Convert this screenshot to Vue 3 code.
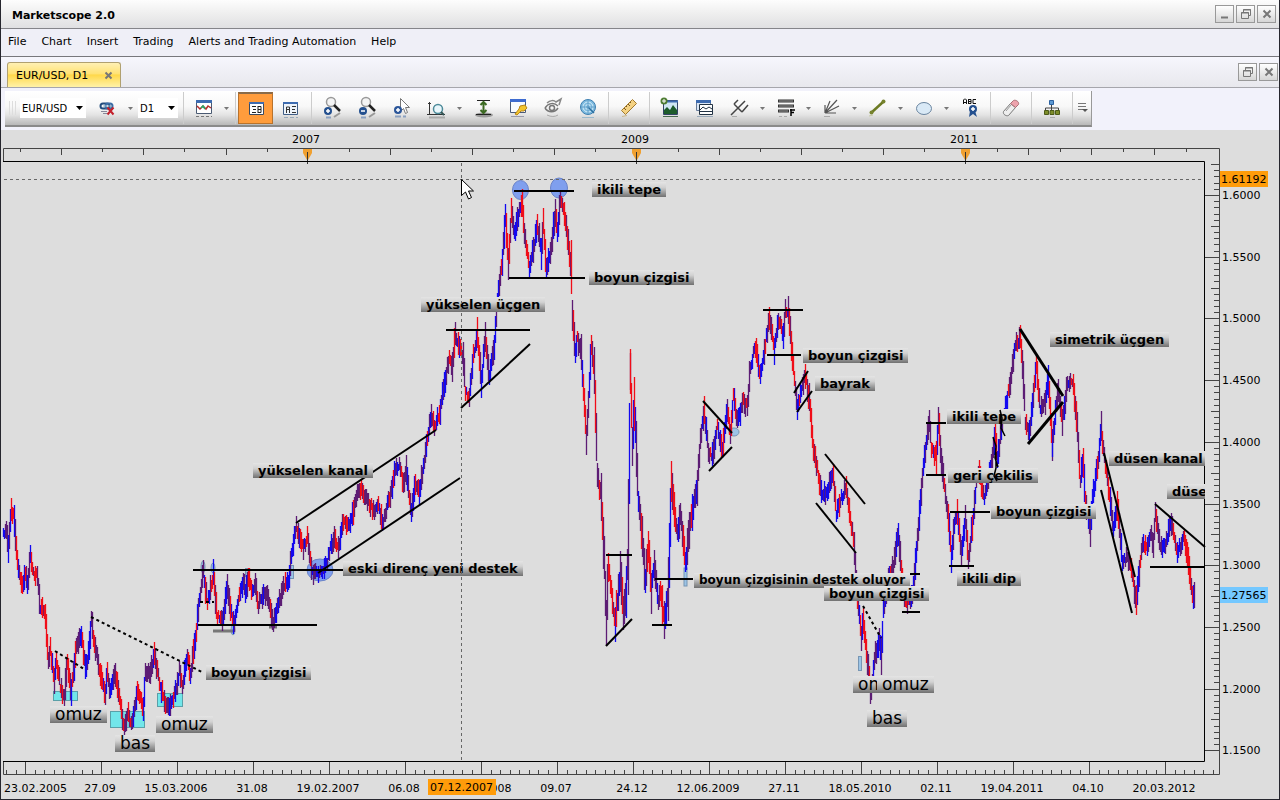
<script setup>
const menus = ['File', 'Chart', 'Insert', 'Trading', 'Alerts and Trading Automation', 'Help']

const tools = [
  { icon: 'link', label: 'Link symbol', caret: true, slot: 'a' },
  { icon: 'chart', label: 'Chart type', caret: true, slot: 'b', sepBefore: true, sepAfter: true },
  { icon: 'bid', label: 'Bid prices', active: true, slot: 'b' },
  { icon: 'ask', label: 'Ask prices', slot: 'b', sepAfter: true },
  { icon: 'zoomin', label: 'Zoom in', slot: 'b' },
  { icon: 'zoomout', label: 'Zoom out', slot: 'b' },
  { icon: 'pointer', label: 'Pointer', slot: 'b' },
  { icon: 'area', label: 'Zoom area', caret: true, slot: 'b' },
  { icon: 'fit', label: 'Fit height', slot: 'b' },
  { icon: 'key', label: 'Properties', slot: 'b' },
  { icon: 'eye', label: 'Show or hide', slot: 'b' },
  { icon: 'radar', label: 'Overview', slot: 'b', sepAfter: true },
  { icon: 'ruler', label: 'Ruler', slot: 'b', sepAfter: true },
  { icon: 'picture', label: 'Add indicator', slot: 'b' },
  { icon: 'windows', label: 'Indicators list', slot: 'b' },
  { icon: 'fork', label: 'Pitchfork', caret: true, slot: 'b' },
  { icon: 'fibo', label: 'Fibonacci', caret: true, slot: 'b' },
  { icon: 'fan', label: 'Gann fan', caret: true, slot: 'b' },
  { icon: 'line', label: 'Trend line', caret: true, slot: 'b' },
  { icon: 'ellipse', label: 'Ellipse', caret: true, slot: 'b' },
  { icon: 'text', label: 'Text label', slot: 'b', sepAfter: true },
  { icon: 'eraser', label: 'Eraser', slot: 'b', sepAfter: true },
  { icon: 'tree', label: 'Strategies', slot: 'b', sepAfter: true }
]
const linkTool = tools.filter(t => t.slot === 'a')
const mainTools = tools.filter(t => t.slot === 'b')

/* Turning points of the daily series, as x, y pairs on the chart canvas. */
const turns = [
  3,535, 6,532, 8,548, 11,510, 14,520, 17,560, 20,578, 23,585, 25,572, 27,586, 30,556, 33,572, 37,575, 40,606, 45,616,
  48,664, 50,650, 54,682, 56,660, 60,686, 64,699, 67,662, 71,690, 76,648, 81,634, 85,668, 88,655, 91,620, 94,645, 100,672,
  105,696, 107,672, 110,692, 115,674, 119,700, 124,729, 128,714, 132,724, 137,688, 143,708, 145,674, 150,672, 154,655,
  160,688, 165,702, 170,704, 175,694, 179,670, 182,685, 187,655, 190,676, 196,630, 199,602, 203,572, 207,602, 210,590,
  213,575, 217,617, 222,620, 227,588, 233,625, 238,600, 243,582, 245,592, 248,578, 252,592, 255,585, 258,604, 264,592,
  268,600, 273,624, 278,605, 283,586, 288,583, 292,550, 296,526, 303,548, 307,537, 312,574, 320,573, 327,562, 330,546,
  334,539, 338,547, 343,521, 348,525, 352,515, 356,497, 361,489, 367,500, 373,511, 378,503, 382,524, 386,508, 391,490,
  395,468, 399,465, 403,484, 406,468, 408,488, 411,513, 415,482, 419,494, 423,466, 427,440, 431,415, 434,428, 440,410,
  444,384, 449,358, 452,370, 455,334, 459,348, 463,357, 465,393, 469,396, 473,355, 477,335, 481,384, 485,334, 489,377,
  494,346, 497,300, 502,262, 505,215, 508,265, 511,213, 514,233, 518,215, 522,202, 524,230, 529,268, 533,250, 537,224,
  541,253, 543,224, 546,268, 551,245, 555,213, 557,233, 560,198, 565,220, 568,245, 571,270, 572,312, 575,355, 577,337,
  581,355, 583,390, 586,438, 588,405, 591,345, 594,370, 596,440, 597,475, 601,500, 604,560, 606,625, 608,565, 612,600,
  615,622, 620,572, 623,610, 626,590, 628,540, 630,370, 632,445, 634,402, 638,500, 642,540, 645,583, 648,545, 651,590,
  654,565, 658,600, 660,588, 664,620, 668,590, 670,520, 671,480, 674,510, 677,535, 680,512, 683,540, 685,565, 689,530,
  694,500, 697,485, 700,440, 704,412, 708,452, 712,456, 717,427, 722,450, 727,412, 730,432, 733,396, 737,422, 743,400,
  747,408, 750,366, 755,348, 760,375, 764,350, 769,318, 774,348, 778,320, 783,334, 785,310, 788,310, 791,345, 794,380,
  797,407, 801,390, 805,375, 809,400, 813,450, 817,470, 822,498, 828,488, 833,475, 836,515, 840,500, 846,488, 850,520,
  854,545, 856,585, 858,605, 861,640, 863,620, 866,650, 870,692, 872,680, 875,655, 879,640, 881,657, 883,612, 888,578,
  893,567, 898,534, 901,570, 904,597, 907,605, 911,598, 914,578, 917,540, 920,500, 925,450, 929,418, 931,448, 936,458,
  938,418, 941,460, 945,492, 949,530, 951,558, 954,525, 957,513, 961,553, 965,520, 968,558, 972,525, 976,482, 979,470,
  984,500, 988,480, 993,450, 995,433, 997,460, 1002,422, 1005,408, 1010,380, 1014,350, 1017,342, 1020,337, 1023,380,
  1025,420, 1029,434, 1034,382, 1036,365, 1040,412, 1045,400, 1048,378, 1052,440, 1055,415, 1058,390, 1062,423,
  1067,385, 1073,382, 1077,430, 1080,478, 1083,460, 1085,500, 1090,530, 1092,500, 1098,458, 1101,428, 1103,450,
  1108,485, 1113,528, 1117,505, 1122,560, 1127,558, 1131,570, 1136,603, 1140,560, 1143,542, 1147,550, 1150,532,
  1153,545, 1155,515, 1160,548, 1165,543, 1171,522, 1177,553, 1184,537, 1188,560, 1193,600, 1195,588
]

let seed = 20071
const rand = () => {
  seed = (seed * 16807) % 2147483647
  return seed / 2147483647
}
const bars = { up: '', down: '', mix: '' }
let k = 0
for (let x = 3; x <= 1194; x++) {
  while (turns[k + 2] <= x) k += 2
  const [x0, y0, x1, y1] = turns.slice(k, k + 4)
  const slope = (y1 - y0) / (x1 - x0)
  const mid = y0 + slope * (x - x0) + (rand() - 0.5) * 7
  const wild = x > 600 && x < 700 ? 6 : 0
  const half = Math.abs(slope) / 2 + 3 + rand() * (7 + wild)
  const pick = rand()
  let kind = 'mix'
  if (pick > 0.45) kind = slope > 0 ? 'down' : 'up'
  if (pick > 0.93) kind = slope > 0 ? 'up' : 'down'
  bars[kind] += `M${x}.5 ${Math.round(mid - half)}V${Math.round(mid + half)}`
}
bars.mix += 'M630.5 353V390M606.5 600V642M1052.5 440V461M455.5 322V345M870.5 690V704M1090.5 530V547M586.5 430V455M1101.5 411V440M938.5 407V430'

const trends = [
  [193,570,343,570], [198,625,317,625], [296,523,436,430], [318,573,460,478], [446,330,530,330], [461,408,530,344],
  [514,191,574,191], [509,278,585,278], [606,555,632,555], [606,646,632,619], [655,579,693,579], [652,625,672,625],
  [703,401,732,433], [709,471,732,447], [763,310,803,310], [767,355,801,355], [794,393,808,371], [797,412,812,391],
  [825,454,865,504], [816,503,856,553], [903,574,920,574], [902,612,920,612], [926,423,946,423], [926,475,946,475],
  [950,512,990,512], [949,566,974,566], [1104,453,1135,577], [1101,490,1132,613], [1150,567,1205,567], [1155,504,1205,547]
]
const thick = [[1020, 329, 1063, 396], [1028, 444, 1063, 402]]
const dotted = [[91, 617, 202, 672], [55, 651, 84, 669], [200, 602, 214, 602], [863, 606, 881, 638]]

const notes = [
  { t: 'ikili tepe', x: 592, y: 182 },
  { t: 'boyun çizgisi', x: 589, y: 270 },
  { t: 'yükselen üçgen', x: 421, y: 297 },
  { t: 'yükselen kanal', x: 253, y: 463 },
  { t: 'eski direnç yeni destek', x: 343, y: 561 },
  { t: 'boyun çizgisi', x: 206, y: 665 },
  { t: 'omuz', x: 50, y: 706, big: true },
  { t: 'bas', x: 115, y: 735, big: true },
  { t: 'omuz', x: 156, y: 716, big: true },
  { t: 'boyun çizgisi', x: 803, y: 348 },
  { t: 'bayrak', x: 815, y: 376 },
  { t: 'boyun çizgisinin destek oluyor', x: 694, y: 573, small: true },
  { t: 'boyun çizgisi', x: 824, y: 586 },
  { t: 'omuz', x: 853, y: 676, big: true },
  { t: 'omuz', x: 877, y: 676, big: true },
  { t: 'bas', x: 867, y: 710, big: true },
  { t: 'ikili tepe', x: 947, y: 409 },
  { t: 'geri çekilis', x: 948, y: 468 },
  { t: 'boyun çizgisi', x: 991, y: 504 },
  { t: 'ikili dip', x: 957, y: 571 },
  { t: 'simetrik üçgen', x: 1050, y: 332 },
  { t: 'düsen kanal', x: 1109, y: 451 },
  { t: 'düsen üçgen', x: 1167, y: 484 }
]
const notePlace = n => ({ left: (n.x / 1205) * 100 + '%', top: ((n.y - 130) / 670) * 100 + '%' })

const prices = Array.from({ length: 10 }, (_, i) => ({ v: (1.6 - i * 0.05).toFixed(4), y: 195 + i * 61.7 }))
let priceTicks = ''
for (let i = -5; i <= 90; i++) {
  const y = Math.round(195 + i * 6.17) + 0.5
  const len = i % 10 === 0 ? 14 : i % 5 === 0 ? 8 : 5
  priceTicks += `M1219 ${y}h-${len}`
}
const dates = ['27.09', '15.03.2006', '31.08', '19.02.2007', '06.08', '17.01.2008', '09.07', '24.12', '12.06.2009', '27.11',
  '18.05.2010', '02.11', '19.04.2011', '04.10', '20.03.2012'].map((v, i) => ({ v, x: 100 + i * 76 }))
let dateTicks = ''
for (let i = -2; i <= 125; i++) {
  const x = Math.round(25 + i * 9.5) + 0.5
  if (x > 1218) break
  dateTicks += i % 8 === 0 ? `M${x} 761V774` : `M${x} 774v-4`
}
let yearTicks = ''
for (let i = 0; i < 23; i++) yearTicks += `M${Math.round(20 + i * 41.1) + 0.5} 149v${i % 2 ? 6 : 3}`
for (let i = 1; i <= 7; i++) yearTicks += `M${Math.round(965 + i * 31.5) + 0.5} 149v${i % 2 ? 3 : 6}`
const years = [{ v: '2007', x: 307 }, { v: '2009', x: 636 }, { v: '2011', x: 965 }]
</script>

<template>
  <div class="app">
    <header class="title">
      <h1>Marketscope 2.0</h1>
      <div class="winbtns">
        <button aria-label="Minimize"><svg width="12" height="12"><path d="M2 9.5h7" stroke="#777" stroke-width="2" /></svg></button>
        <button aria-label="Restore"><svg width="12" height="12"><path d="M3.500 4V1.500h7v6H8M3 2h8M1.500 4.500h7v6h-7zM1 5h8" fill="none" stroke="#777" /></svg></button>
        <button aria-label="Close"><svg width="12" height="12"><path d="M2.500 2.500l7 7m0-7l-7 7" stroke="#777" stroke-width="2" /></svg></button>
      </div>
    </header>

    <nav class="menu">
      <button v-for="m in menus" :key="m">{{ m }}</button>
    </nav>

    <div class="tabs">
      <div class="tab">
        <button class="tabname">EUR/USD, D1</button>
        <button class="tabclose" aria-label="Close tab"><svg width="9" height="9"><path d="M1.500 1.500l6 6m0-6l-6 6" stroke="#777" stroke-width="2" /></svg></button>
      </div>
      <div class="winbtns">
        <button aria-label="Restore chart"><svg width="12" height="12"><path d="M3.500 4V1.500h7v6H8M3 2h8M1.500 4.500h7v6h-7zM1 5h8" fill="none" stroke="#777" /></svg></button>
        <button aria-label="Close chart"><svg width="12" height="12"><path d="M2.500 2.500l7 7m0-7l-7 7" stroke="#777" stroke-width="2" /></svg></button>
      </div>
    </div>

    <div class="toolrow">
      <div class="toolbar">
        <svg class="grip" width="8" height="14"><path d="M1.500 0v14M4.500 0v14M7.500 0v14" stroke="#ddd" /></svg>
        <span class="pick wide">
          <select aria-label="Symbol"><option>EUR/USD</option></select>
          <svg width="7" height="4"><path d="M0 0h7l-3.500 4z" /></svg>
        </span>
        <template v-for="group in [linkTool, mainTools]" :key="group.length">
          <template v-for="t in group" :key="t.icon">
            <i v-if="t.sepBefore" class="sep"></i>
            <button class="tool" :class="{ active: t.active }" :aria-label="t.label">
              <svg width="24" height="24" viewBox="0 0 24 24" fill="none">
                <g v-if="t.icon === 'link'">
                  <rect x="4.500" y="7.500" width="9" height="5" rx="2.500" stroke="#234d7d" stroke-width="2" />
                  <rect x="9.500" y="7.500" width="7" height="5" rx="2.500" stroke="#3c6da5" stroke-width="2" />
                  <path d="M7 10h7" stroke="#9bc" /><path d="M5 15.500h6M7 17.500h4" stroke="#889" />
                  <path d="M11.500 11.500l6 7m0-7l-6 7" stroke="#c3202c" stroke-width="2" />
                </g>
                <g v-else-if="t.icon === 'chart'">
                  <path d="M4.500 4.500h15v13h-15z" fill="#fff" stroke="#4a5a72" /><path d="M4 5.500h16" stroke="#3d6bb0" stroke-width="3" />
                  <path d="M5 10l3 3 3-3 3 3 2-3 3 2" stroke="#b52b2b" stroke-width="1.500" /><path d="M9 12l2-2 2 3" stroke="#2a6" stroke-width="1.500" />
                  <path d="M4 20.500h16" stroke="#777" stroke-dasharray="3 2" />
                </g>
                <g v-else-if="t.icon === 'bid'">
                  <path d="M5.500 5.500h14v12h-14z" fill="#fff" stroke="#3a4a60" /><path d="M5 6h15" stroke="#3d6bb0" stroke-width="2" />
                  <path d="M8 9.500h4M9 12.500h3M8 15.500h4M14 9v7M14 9.500h3v6h-3M14 12.500h3" stroke="#222" />
                </g>
                <g v-else-if="t.icon === 'ask'">
                  <path d="M4.500 6.500h14v12h-14z" fill="#eef4fb" stroke="#3f5d86" /><path d="M4 7h15" stroke="#3d6bb0" stroke-width="2" />
                  <path d="M7.500 17v-6h3v6M7 13.500h4M13 10.500h4M13 13.500h3M13 16.500h4" stroke="#333" /><path d="M5 21.500h14" stroke="#9ab" stroke-dasharray="4 2" />
                </g>
                <g v-else-if="t.icon === 'zoomin' || t.icon === 'zoomout'">
                  <circle cx="11" cy="6" r="4.500" fill="#f4f4f4" stroke="#999" stroke-width="1.500" />
                  <path d="M14 9l6 6" stroke="#222" stroke-width="2.500" /><path d="M20 17l-6 4" stroke="#999" stroke-width="2" />
                  <circle cx="8" cy="15" r="4" fill="#24508f" /><path d="M6 15h4" stroke="#fff" stroke-width="1.500" />
                  <path v-if="t.icon === 'zoomin'" d="M8 13v4" stroke="#fff" stroke-width="1.500" />
                  <path d="M6 21.500h5" stroke="#8aa0c0" stroke-width="2" />
                </g>
                <g v-else-if="t.icon === 'pointer'">
                  <path d="M10.500 2.500v13l3-3 2 5 2-1-2-5h4z" fill="#fff" stroke="#777" />
                  <circle cx="8" cy="14" r="4" fill="#2b569a" /><path d="M6 14h4M8 12v4" stroke="#fff" stroke-width="1.500" />
                  <path d="M5 20.500h6M13 20.500h3" stroke="#8aa0c0" stroke-width="2" />
                </g>
                <g v-else-if="t.icon === 'area'">
                  <path d="M4.500 6v13M2 18.500h18M3 7.500h3" stroke="#333" /><circle cx="13" cy="13" r="4.500" fill="#e8f6fb" stroke="#4c8a99" stroke-width="1.500" />
                  <path d="M16 16l3 3" stroke="#355" stroke-width="2" /><path d="M4 21.500h16" stroke="#aaa" stroke-width="2" />
                </g>
                <g v-else-if="t.icon === 'fit'">
                  <ellipse cx="13" cy="19" rx="9" ry="2.500" fill="#999" /><path d="M6 4.500h13M5 18.500h15" stroke="#222" />
                  <path d="M12.500 6v11M9.500 9l3-3 3 3M9.500 14l3 3 3-3" stroke="#3c6a22" stroke-width="2" />
                </g>
                <g v-else-if="t.icon === 'key'">
                  <path d="M4.500 3.500h15v13h-15z" fill="#f8fbff" stroke="#4a5a78" /><path d="M4 4.500h16" stroke="#3d6bd0" stroke-width="3" />
                  <path d="M19 9l2 3-3 3-3 0-4 4-2-1 4-5 1-3z" fill="#f3c52d" stroke="#b8861a" /><path d="M5 20.500h13" stroke="#99a" />
                </g>
                <g v-else-if="t.icon === 'eye'">
                  <path d="M4 12c3-5 9-6 13-2M4 12c3 5 10 5 13 0" stroke="#777" stroke-width="1.500" /><circle cx="11" cy="12" r="2.500" stroke="#777" stroke-width="1.500" />
                  <path d="M6 7c3-3 7-3 9-1l5-3-2 6" stroke="#888" stroke-width="1.500" /><path d="M6 19c4 2 8 2 11 0" stroke="#aaa" />
                </g>
                <g v-else-if="t.icon === 'radar'">
                  <circle cx="12" cy="11" r="7.500" fill="#7fbbe0" stroke="#3d7fb0" /><circle cx="12" cy="11" r="5" stroke="#d5edf8" /><circle cx="12" cy="11" r="2.500" stroke="#d5edf8" />
                  <path d="M12 11l6 6" stroke="#2d6f9f" stroke-width="1.500" /><path d="M5 11h14M12 4v14" stroke="#5f9cc6" /><path d="M6 21.500h12" stroke="#9bb9cc" />
                </g>
                <g v-else-if="t.icon === 'ruler'">
                  <path d="M4.500 14.500l11-11 4 4-11 11z" fill="#f4d283" stroke="#a27a2e" /><path d="M7 12l2 2M9 10l1 1M11 8l2 2M13 6l1 1" stroke="#7a5a20" /><path d="M5 20.500l5-1" stroke="#c9b68b" />
                </g>
                <g v-else-if="t.icon === 'picture'">
                  <path d="M5.500 4.500h14v14h-14z" fill="#cfe6f4" stroke="#346" /><path d="M5 5.500h15" stroke="#3d6bb0" stroke-width="2" /><path d="M6 18v-4l3-3 3 3 3-5 4 5v4z" fill="#1d5c2c" />
                  <circle cx="6" cy="5" r="3.500" fill="#4f7d34" /><path d="M4 5h4M6 3v4" stroke="#fff" /><path d="M5 20.500h15" stroke="#486a50" />
                </g>
                <g v-else-if="t.icon === 'windows'">
                  <path d="M3.500 4.500h14v10h-14z" fill="#dbe7f5" stroke="#667a98" /><path d="M3 5.500h15" stroke="#3d6bb0" stroke-width="3" />
                  <path d="M6.500 8.500h13v10h-13z" fill="#fff" stroke="#234" /><path d="M7 14l3-3 3 2 3-2 3 2M6 15.500h14" stroke="#234" /><path d="M4 20.500h16" stroke="#9ab" />
                </g>
                <g v-else-if="t.icon === 'fork'">
                  <path d="M3 19l7-7M6 8l8 8M6 8l4-4M10 12l7-7M14 16l6-7" stroke="#444" stroke-width="1.500" /><path d="M4 20.500h5" stroke="#aaa" />
                </g>
                <g v-else-if="t.icon === 'fibo'">
                  <path d="M4 5h16M4 10h16M4 15h11" stroke="#333" stroke-width="3" /><path d="M5 5h14M5 10h14M5 15h9" stroke="#999" />
                  <path d="M17 20v-7M16 14h5M17 16.500h3" stroke="#000" stroke-width="1.500" /><path d="M5 20.500h8" stroke="#aaa" stroke-dasharray="3 2" />
                </g>
                <g v-else-if="t.icon === 'fan'">
                  <path d="M5 17L10 5M5 17L17 4M5 17l14-7M5 17h11M5 17V9" stroke="#555" stroke-width="1.200" /><path d="M4 20.500h6" stroke="#aaa" />
                </g>
                <g v-else-if="t.icon === 'line'">
                  <path d="M5 17L17 6" stroke="#6c7a22" stroke-width="2.500" /><circle cx="5.500" cy="16.500" r="2" fill="#76832e" /><circle cx="17.500" cy="5.500" r="2" fill="#76832e" /><path d="M3 20l4-1" stroke="#c5c9a5" />
                </g>
                <g v-else-if="t.icon === 'ellipse'">
                  <ellipse cx="12" cy="12.500" rx="7.500" ry="6" fill="#d9e9f6" stroke="#69849f" />
                </g>
                <g v-else-if="t.icon === 'text'">
                  <path d="M5.500 8V4l1-1h1l1 1v4M5 6.500h4M10.500 3v5M10 3.500h3v4h-3M10 5.500h3M18 3.500h-3v4h3" stroke="#111" />
                  <path d="M12 15l-1 6 4-3 4 3-2-6" fill="#24508f" /><circle cx="15" cy="13" r="4" fill="#24508f" /><path d="M13 13h4M15 11v4" stroke="#fff" stroke-width="1.500" />
                </g>
                <g v-else-if="t.icon === 'eraser'">
                  <path d="M4.500 15.500l7-8 5 4-7 8c-2 1-6-1-5-4z" fill="#eee" stroke="#777" /><path d="M11.500 7.500l3-3c2-1 6 1 5 4l-3 3z" fill="#eda2ac" stroke="#a87076" />
                  <path d="M7 15l5-6" stroke="#999" />
                </g>
                <g v-else-if="t.icon === 'tree'">
                  <path d="M9.500 4.500h4v4h-4z" fill="#5d9ad4" stroke="#2d62a0" /><path d="M11.500 9v4M5.500 15v-3h13v3M11.500 12v3" stroke="#444" />
                  <path d="M4.500 14.500h4v4h-4zM10 14.500h4v4h-4zM15.500 14.500h4v4h-4z" fill="#7d8d2a" stroke="#4c5a18" /><path d="M10 21.500h5" stroke="#aaa" />
                </g>
              </svg>
            </button>
            <button v-if="t.caret" class="caret" :aria-label="t.label + ' options'"><svg width="5" height="3"><path d="M0 0h5l-2.500 3z" fill="#777" /></svg></button>
            <i v-if="t.sepAfter" class="sep"></i>
          </template>
          <span v-if="group === linkTool" class="pick">
            <select aria-label="Period"><option>D1</option></select>
            <svg width="7" height="4"><path d="M0 0h7l-3.500 4z" /></svg>
          </span>
        </template>
        <button class="more" aria-label="More tools"><svg width="12" height="12"><path d="M1 1.500h8M1 4.500h8M1 7.500h5" stroke="#777" /><path d="M5 7h6l-3 3z" fill="#555" /></svg></button>
      </div>
    </div>

    <main class="chart">
      <svg class="layer" viewBox="0 130 1280 670" fill="none">
        <g stroke="#444">
          <path d="M3.500 162V148.500H1219.500V774.500H3.500V761" />
          <path :d="yearTicks" /><path :d="priceTicks" /><path :d="dateTicks" />
        </g>
        <g v-for="y in years" :key="y.v">
          <text :x="y.x - 1" y="143" text-anchor="middle">{{ y.v }}</text>
          <path :d="`M${y.x - 4} 149h9v4l-4 7h-1l-4-7z`" fill="#f0a030" /><path :d="`M${y.x}.5 152v12`" stroke="#333" />
        </g>

        <g fill="#72e6ea" stroke="#5aa0a8">
          <rect x="53.500" y="691.500" width="24" height="9" /><rect x="110.500" y="711.500" width="34" height="16" /><rect x="157.500" y="693.500" width="25" height="13" />
        </g>
        <g fill="#7f9fee" stroke="#6a83c8" stroke-width="1">
          <ellipse cx="520.500" cy="190" rx="8" ry="9.500" /><ellipse cx="559" cy="188" rx="8.500" ry="10" />
          <ellipse cx="320" cy="570" rx="13" ry="11" />
        </g>
        <g fill="#9cc4e6" stroke="#7796b4" stroke-width="1">
          <ellipse cx="203" cy="567" rx="2" ry="6" /><ellipse cx="213" cy="568" rx="2" ry="5" /><rect x="245.500" y="568.500" width="4" height="8" />
          <rect x="289.500" y="565.500" width="4" height="13" /><ellipse cx="734" cy="432" rx="5" ry="4" /><ellipse cx="233" cy="630" rx="2" ry="5" />
          <rect x="858.500" y="656.500" width="3" height="14" /><rect x="684" y="568" width="3" height="18" />
        </g>
        <path d="M213 631h20M269 627h8" stroke="#777" stroke-width="3" />

        <g stroke-width="1.300">
          <path :d="bars.mix" stroke="#5c1c74" /><path :d="bars.up" stroke="#1208f0" /><path :d="bars.down" stroke="#f00d18" />
        </g>

        <g stroke="#000" stroke-width="2">
          <path v-for="(l, i) in trends" :key="i" :d="`M${l[0]} ${l[1]}L${l[2]} ${l[3]}`" />
          <path v-for="(l, i) in dotted" :key="i" :d="`M${l[0]} ${l[1]}L${l[2]} ${l[3]}`" stroke-dasharray="3 3" />
          <path v-for="(l, i) in thick" :key="i" :d="`M${l[0]} ${l[1]}L${l[2]} ${l[3]}`" stroke-width="3" />
        </g>

        <path d="M3 161.500H1204.500V761.500H3" stroke="#000" />

        <text v-for="p in prices" :key="p.v" x="1222" :y="p.y + 4">{{ p.v }}</text>
        <rect x="1220" y="171" width="48" height="16" fill="#ff9c0a" /><text x="1221" y="183">1.61192</text>
        <rect x="1220" y="587" width="48" height="16" fill="#74c8ff" /><text x="1221" y="599">1.27565</text>

        <text x="4" y="792">23.02.2005</text>
        <text v-for="d in dates" :key="d.v" :x="d.x" y="792" text-anchor="middle">{{ d.v }}</text>
        <rect x="428" y="779" width="68" height="16" fill="#ff9c0a" /><text x="430" y="791">07.12.2007</text>
      </svg>

      <div class="notes">
        <span v-for="(n, i) in notes" :key="i" class="note" :class="{ big: n.big, small: n.small }" :style="notePlace(n)">{{ n.t }}</span>
      </div>

      <svg class="layer over" viewBox="0 130 1280 670" fill="none">
        <path d="M4 179.500H1204M461.500 163V761" stroke="#666" stroke-dasharray="3 3" />
        <path d="M1000 410l2 8-1 10 4 8M993 437l3 9-1 12 3 9M996 452v16l-2 8 3 5" stroke="#000" stroke-width="1.500" />
        <path d="M461.500 179.500v16l4-3.500 3 7 3-1.500-3-6.500h5z" fill="#fff" stroke="#000" />
      </svg>
    </main>
  </div>
</template>

<style>
body { margin: 0; background: #ddd; }
</style>

<style scoped>
.app {
  min-height: 100vh;
  box-sizing: border-box;
  font-family: "DejaVu Sans", Verdana, sans-serif;
  font-size: 11px;
  color: #000;
  background: #ddd;
  position: relative;
}
.app::after {
  content: "";
  position: absolute;
  inset: 0;
  border: solid #26262e;
  border-width: 0 1px 1px 1px;
  pointer-events: none;
}
button {
  font: inherit;
  color: inherit;
  background: none;
  border: 0;
  padding: 0;
  margin: 0;
}
svg { display: block; }
.title {
  display: flex;
  justify-content: space-between;
  align-items: center;
  height: 28px;
  padding: 0 4px 0 12px;
  background: linear-gradient(#fdfdfd, #eee 50%, #e0e0e2);
  border-bottom: 1px solid #85858a;
}
.title h1 { margin: 0; font-size: 11px; font-weight: bold; padding-top: 2px; }
.winbtns { display: flex; gap: 2px; }
.winbtns button {
  width: 19px;
  height: 18px;
  display: grid;
  place-items: center;
  background: linear-gradient(#fff, #d6d6d6);
  border: 1px solid #999;
  box-sizing: border-box;
}
.menu {
  display: flex;
  align-items: center;
  gap: 15px;
  height: 25px;
  padding: 0 8px 2px;
  background: #efeff7;
  border-bottom: 1px solid #77777c;
}
.tabs {
  display: flex;
  justify-content: space-between;
  align-items: flex-end;
  height: 30px;
  padding: 0 2px 0 7px;
  background: linear-gradient(#f6f6fd, #e8e8ed);
  border-bottom: 1px solid #a6a6ac;
}
.tabs .winbtns { padding-bottom: 6px; }
.tab {
  display: flex;
  align-items: center;
  gap: 16px;
  height: 24px;
  padding: 0 7px 0 8px;
  border: 1px solid #b0a070;
  border-bottom: 0;
  border-radius: 3px 3px 0 0;
  background: linear-gradient(#fff0b4, #ffe274 45%, #ffd84a 50%, #fff2a8);
}
.toolrow { background: #f2f2fb; height: 42px; padding: 3px 5px 0; box-sizing: border-box; }
.toolbar {
  display: flex;
  align-items: center;
  width: max-content;
  height: 36px;
  box-sizing: border-box;
  padding-left: 3px;
  background: linear-gradient(#fff, #f8f8f8 45%, #e4e4e4 70%, #b8b8b8);
  border-bottom: 2px solid #8a8a8a;
  border-right: 1px solid #999;
}
.grip { margin-right: 2px; }
.pick { display: grid; align-items: center; width: 40px; height: 20px; margin: 0 2px; background: #fff; }
.pick.wide { width: 66px; margin-right: 4px; }
.pick select, .pick svg { grid-area: 1 / 1; }
.pick select {
  appearance: none;
  width: 100%;
  height: 20px;
  border: 0;
  padding: 0 0 0 2px;
  background: transparent;
  font: 10px "DejaVu Sans", Verdana, sans-serif;
  color: #000;
}
.pick svg { justify-self: end; margin-right: 3px; pointer-events: none; }
.tool { width: 35px; height: 32px; display: grid; place-items: center; flex: none; }
.tool.active { background: #ff9c3c; border: 1px solid #b8722c; border-top: 2px solid #8a6a48; box-sizing: border-box; }
.caret { width: 11px; height: 32px; display: grid; place-items: center; flex: none; }
.sep { width: 1px; height: 32px; margin: 0 2px 0 3px; background: #ccc; flex: none; }
.more { width: 16px; height: 32px; display: grid; place-items: center; }
.chart { position: relative; background: #ddd; }
.layer { width: 100%; height: auto; }
.layer.over { position: absolute; inset: 0; pointer-events: none; }
.layer text { font-size: 11px; fill: #000; }
.notes { position: absolute; top: 0; bottom: 0; left: 0; width: 94.140625%; overflow: hidden; }
.note {
  position: absolute;
  padding: 0 5px;
  font-size: 13px;
  font-weight: bold;
  line-height: 15px;
  white-space: nowrap;
  background: linear-gradient(#e4e4e4, #d2d2d2 35%, #707070);
}
.note.small { font-size: 12px; }
.note.big { font-size: 17px; font-weight: normal; line-height: 17px; }
</style>
